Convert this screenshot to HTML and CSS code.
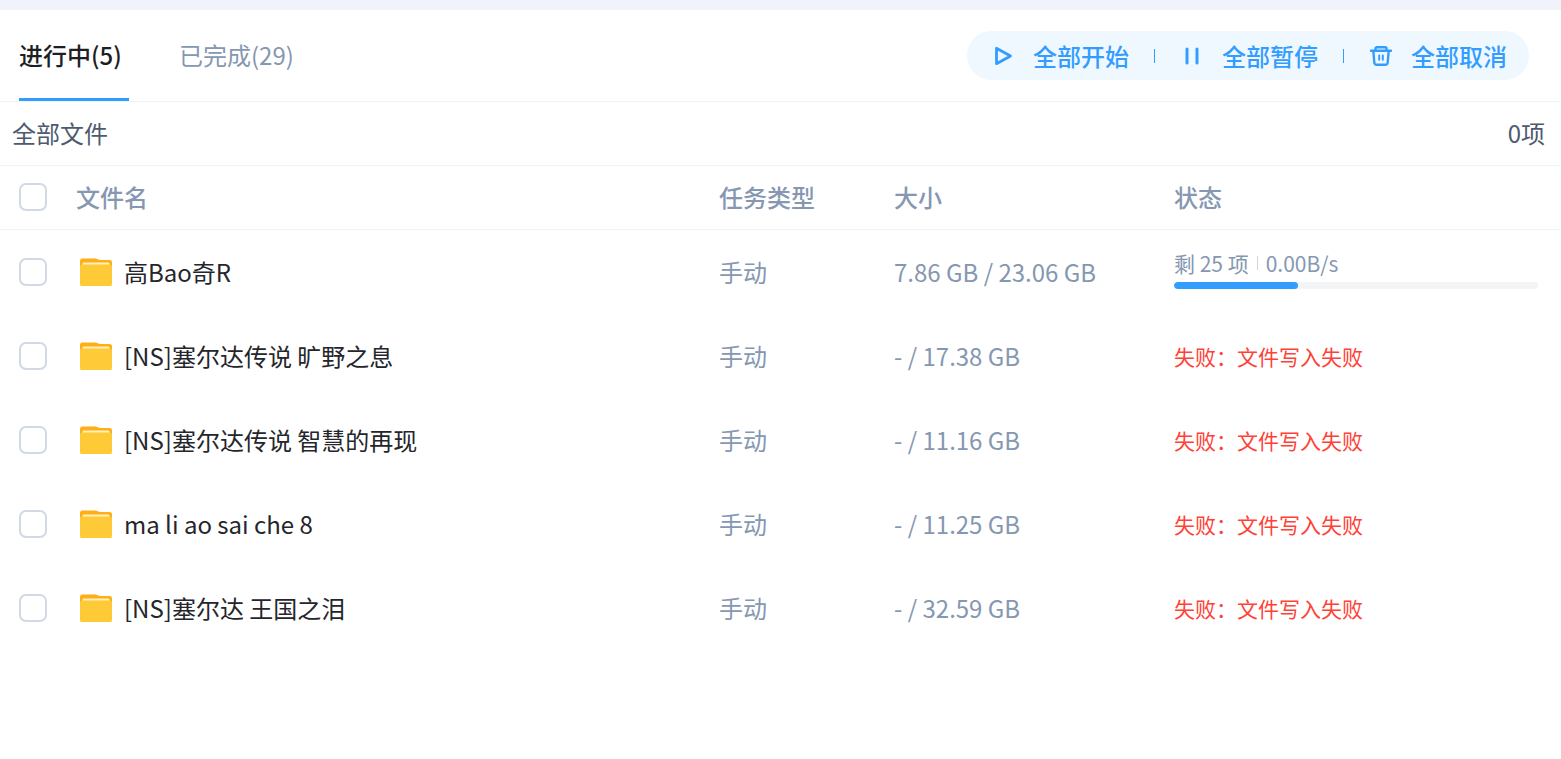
FILE: index.html
```html
<!DOCTYPE html>
<html lang="zh-CN">
<head>
<meta charset="utf-8">
<meta name="viewport" content="width=device-width, initial-scale=1">
<title>传输列表</title>
<link rel="stylesheet" href="styles.css">
</head>
<body>
<svg class="sprite" aria-hidden="true">
  <symbol id="folder" viewBox="0 0 32 28">
    <path d="M0 3a2.500 2.500 0 0 1 2.500-2.500h12.500c2 0 3.500 1.500 5.500 1.500h9a2.500 2.500 0 0 1 2.500 2.500V12H0z" fill="#ffae14"/>
    <path d="M2.500 8V5.800a1.300 1.300 0 0 1 1.300-1.300h24.400a1.300 1.300 0 0 1 1.300 1.300V8z" fill="#fff0c2"/>
    <path d="M0 9a2.500 2.500 0 0 1 2.500-2.500h27a2.500 2.500 0 0 1 2.500 2.500V26a2.300 2.300 0 0 1-2.300 2.300H2.300a2.300 2.300 0 0 1-2.300-2.300z" fill="#ffca38"/>
  </symbol>
</svg>
<main class="page">
  <header class="topbar">
    <div class="tabs" role="tablist">
      <button class="tab tab-active" type="button" role="tab" aria-selected="true">进行中(5)</button>
      <button class="tab" type="button" role="tab" aria-selected="false">已完成(29)</button>
    </div>
    <div class="actions">
      <button class="action" type="button">
        <svg class="action-icon" viewBox="0 0 24 24"><path d="M5.500 4.300v15.400L19.500 12z" fill="none" stroke="currentColor" stroke-width="2.800" stroke-linejoin="round"/></svg>
        全部开始
      </button>
      <span class="divider"></span>
      <button class="action" type="button">
        <svg class="action-icon" viewBox="0 0 24 24"><path d="M7 5v14M17 5v14" fill="none" stroke="currentColor" stroke-width="3" stroke-linecap="round"/></svg>
        全部暂停
      </button>
      <span class="divider"></span>
      <button class="action" type="button">
        <svg class="action-icon" viewBox="0 0 24 24" fill="none" stroke="currentColor" stroke-width="2.400" stroke-linecap="round" stroke-linejoin="round"><path d="M2 6.700h20M6.500 6.500V4.500a1.300 1.300 0 0 1 1.300-1.300h8.400a1.300 1.300 0 0 1 1.300 1.300v2M4.300 6.700l1 11.800a2.500 2.500 0 0 0 2.500 2.300h8.400a2.500 2.500 0 0 0 2.500-2.300l1-11.800"/><path d="M10.200 11.500v4.300M13.800 11.500v4.300" stroke-width="2"/></svg>
        全部取消
      </button>
    </div>
  </header>
  <div class="summary">
    <span>全部文件</span>
    <span>0项</span>
  </div>
  <table class="tasks">
    <colgroup><col class="col-check"><col><col class="col-type"><col class="col-size"><col class="col-status"></colgroup>
    <thead>
      <tr>
        <th class="check-cell"><input class="check" type="checkbox" aria-label="全选"></th>
        <th>文件名</th><th>任务类型</th><th>大小</th><th>状态</th>
      </tr>
    </thead>
    <tbody>
      <tr>
        <td class="check-cell"><input class="check" type="checkbox" id="t1" aria-label="高Bao奇R"></td>
        <td><label class="file" for="t1"><svg class="folder"><use href="#folder"/></svg>高Bao奇R</label></td>
        <td>手动</td><td>7.86 GB / 23.06 GB</td>
        <td><div class="running"><div class="stats"><span>剩 25 项</span><span class="stat-divider"></span><span>0.00B/s</span></div><progress class="bar" max="23.06" value="7.86" aria-label="下载进度"></progress></div></td>
      </tr>
      <tr>
        <td class="check-cell"><input class="check" type="checkbox" id="t2" aria-label="[NS]塞尔达传说 旷野之息"></td>
        <td><label class="file" for="t2"><svg class="folder"><use href="#folder"/></svg>[NS]塞尔达传说 旷野之息</label></td>
        <td>手动</td><td>- / 17.38 GB</td><td class="failed">失败：文件写入失败</td>
      </tr>
      <tr>
        <td class="check-cell"><input class="check" type="checkbox" id="t3" aria-label="[NS]塞尔达传说 智慧的再现"></td>
        <td><label class="file" for="t3"><svg class="folder"><use href="#folder"/></svg>[NS]塞尔达传说 智慧的再现</label></td>
        <td>手动</td><td>- / 11.16 GB</td><td class="failed">失败：文件写入失败</td>
      </tr>
      <tr>
        <td class="check-cell"><input class="check" type="checkbox" id="t4" aria-label="ma li ao sai che 8"></td>
        <td><label class="file" for="t4"><svg class="folder"><use href="#folder"/></svg>ma li ao sai che 8</label></td>
        <td>手动</td><td>- / 11.25 GB</td><td class="failed">失败：文件写入失败</td>
      </tr>
      <tr>
        <td class="check-cell"><input class="check" type="checkbox" id="t5" aria-label="[NS]塞尔达 王国之泪"></td>
        <td><label class="file" for="t5"><svg class="folder"><use href="#folder"/></svg>[NS]塞尔达 王国之泪</label></td>
        <td>手动</td><td>- / 32.59 GB</td><td class="failed">失败：文件写入失败</td>
      </tr>
    </tbody>
  </table>
</main>
</body>
</html>
```
FILE: styles.css
```css
* { box-sizing: border-box; }
body {
  margin: 0;
  background: #fff;
  color: #25262b;
  font-family: "Noto Sans CJK SC", sans-serif;
  font-size: 24px;
  line-height: 36px;
}
button {
  border: 0;
  padding: 0;
  background: none;
  color: inherit;
  font: inherit;
  cursor: pointer;
}
.sprite { display: none; }
.page { border-top: 10px solid #f0f4fa; }

.topbar {
  display: flex;
  justify-content: space-between;
  align-items: center;
  height: 92px;
  padding: 0 32px 0 19px;
  border-bottom: 1px solid #f2f3f5;
}
.tabs {
  display: flex;
  align-self: stretch;
  gap: 50px;
}
.tab {
  min-width: 110px;
  padding-top: 1px;
  border-bottom: 3px solid transparent;
  color: #8597b1;
  text-align: left;
}
.tab-active {
  border-bottom-color: #329dff;
  color: #1d1f24;
  font-weight: 500;
}
.actions {
  display: flex;
  align-items: center;
  gap: 25px;
  height: 49px;
  padding: 0 22px 0 24px;
  border-radius: 25px;
  background: #f0f8ff;
  color: #329dff;
}
.action {
  display: flex;
  align-items: center;
  gap: 18px;
  font-size: 24px;
  font-weight: 500;
}
.action-icon {
  width: 24px;
  height: 24px;
}
.divider {
  width: 1px;
  height: 14px;
  background: #329dff;
}

.summary {
  display: flex;
  justify-content: space-between;
  align-items: center;
  height: 64px;
  padding: 0 16px 2px 12px;
  border-bottom: 1px solid #f2f3f5;
  color: #4e5a6f;
}

.tasks {
  width: 100%;
  border-collapse: separate;
  border-spacing: 0;
  table-layout: fixed;
  color: #8597b1;
}
.col-check { width: 76px; }
.col-type { width: 175px; }
.col-size { width: 280px; }
.col-status { width: 387px; }
.tasks th {
  height: 64px;
  padding: 0 0 2px;
  border-bottom: 1px solid #f2f3f5;
  font-weight: 500;
  text-align: left;
}
.tasks td {
  height: 84px;
  padding: 0;
}
.tasks .check-cell { padding-left: 19px; }
.check {
  display: block;
  width: 28px;
  height: 28px;
  margin: 0;
  appearance: none;
  border: 2px solid #d0d9e5;
  border-radius: 7px;
  background: #fff;
}
.check:checked {
  border-color: #329dff;
  background: #329dff;
}
.file {
  display: flex;
  align-items: center;
  gap: 12px;
  padding-left: 4px;
  color: #25262b;
}
.folder {
  flex: none;
  width: 32px;
  height: 28px;
}
.running {
  padding: 0 23px 6px 0;
  font-size: 21px;
  line-height: 28px;
}
.stats {
  display: flex;
  align-items: center;
  gap: 8px;
}
.stat-divider {
  width: 1px;
  height: 14px;
  background: #ccd5e0;
}
.bar {
  display: block;
  width: 100%;
  height: 7px;
  margin-top: 5px;
  appearance: none;
  border: 0;
  border-radius: 4px;
  background: #f2f4f6;
  overflow: hidden;
}
.bar::-webkit-progress-bar { background: #f2f4f6; }
.bar::-webkit-progress-value {
  border-radius: 4px;
  background: #329dff;
}
.tasks .failed {
  color: #ff4238;
  font-size: 21px;
}
```
